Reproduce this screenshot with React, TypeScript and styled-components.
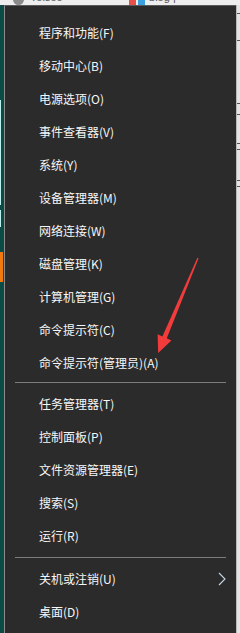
import React from "react";
import styled, { createGlobalStyle } from "styled-components";

const Global = createGlobalStyle`
  html, body { margin: 0; padding: 0; background: #e9e9e9; }
  body { width: 240px; height: 633px; overflow: hidden; }
  #root { width: 240px; height: 633px; }
`;

const Screen = styled.div`
  position: relative;
  width: 240px;
  height: 633px;
  display: grid;
  grid-template-rows: 5px 1fr;
  overflow: hidden;
  background: #e9e9e9;
`;

const TabStrip = styled.div`
  display: flex;
  align-items: flex-start;
  height: 5px;
  overflow: hidden;
  background: #eeeeee;
  font-family: "Liberation Sans", Arial, sans-serif;
  font-size: 11px;
  color: #555;
`;

const TabCircle = styled.div<{ $color: string; $left: number; $size: number }>`
  flex: none;
  width: ${(p) => p.$size}px;
  height: ${(p) => p.$size}px;
  margin-left: ${(p) => p.$left}px;
  margin-top: -${(p) => p.$size / 2 + 1}px;
  border-radius: 50%;
  box-sizing: border-box;
  ${(p) => (p.$color === "pink" ? "border: 2px solid #e83fa6; background: #fff;" : `background: ${p.$color};`)}
`;

const TabText = styled.span<{ $left: number }>`
  flex: none;
  margin-left: ${(p) => p.$left}px;
  margin-top: -9px;
  line-height: 12px;
  white-space: nowrap;
`;

const TabSquare = styled.div<{ $color: string; $left: number }>`
  flex: none;
  width: 7px;
  height: 8px;
  margin-left: ${(p) => p.$left}px;
  margin-top: -3px;
  background: ${(p) => p.$color};
`;

const Body = styled.div`
  display: grid;
  grid-template-columns: 4px 1fr 4px;
  min-height: 0;
`;

const LeftEdge = styled.div`
  display: flex;
  flex-direction: column;
  background: #0c4a45;
`;

const EdgeBit = styled.div<{ $h: number; $color: string; $w: number }>`
  flex: none;
  height: ${(p) => p.$h}px;
  width: ${(p) => p.$w}px;
  background: ${(p) => p.$color};
`;

const RightEdge = styled.div`
  display: flex;
  flex-direction: column;
  background: #e4e4e4;
  border-left: 1px solid #b8b8b8;
  box-sizing: border-box;
`;

const RightMark = styled.div<{ $top: number }>`
  flex: none;
  margin-top: ${(p) => p.$top}px;
  width: 3px;
  height: 1px;
  background: #555;
`;

const Menu = styled.div`
  display: flex;
  flex-direction: column;
  background: #2b2b2b;
  border-left: 1px solid #8d8d8d;
  border-top: 1px solid #5a5a5a;
  padding-top: 10px;
  font-family: "Noto Sans CJK SC", "Microsoft YaHei", sans-serif;
  font-size: 12px;
  color: #f7f7f7;
`;

const Item = styled.div`
  display: flex;
  align-items: center;
  justify-content: space-between;
  height: 33px;
  padding-left: 34px;
  padding-right: 10px;
  white-space: nowrap;
`;

const Separator = styled.div<{ $top: number; $bottom: number }>`
  height: 1px;
  margin: ${(p) => p.$top}px 10px ${(p) => p.$bottom}px 10px;
  background: #7c7c7c;
`;

const Overlay = styled.svg`
  position: absolute;
  left: 0;
  top: 0;
  width: 240px;
  height: 633px;
  pointer-events: none;
`;

const Chevron = () => (
  <svg width="8" height="14" viewBox="0 0 8 14" style={{ display: "block" }}>
    <polyline points="1,1 7,7 1,13" fill="none" stroke="#c9d6e6" strokeWidth="1.1" />
  </svg>
);

const groupA = [
  "程序和功能(F)",
  "移动中心(B)",
  "电源选项(O)",
  "事件查看器(V)",
  "系统(Y)",
  "设备管理器(M)",
  "网络连接(W)",
  "磁盘管理(K)",
  "计算机管理(G)",
  "命令提示符(C)",
  "命令提示符(管理员)(A)",
];

const groupB = ["任务管理器(T)", "控制面板(P)", "文件资源管理器(E)", "搜索(S)", "运行(R)"];

export default function App() {
  return (
    <>
      <Global />
      <Screen>
        <TabStrip>
          <TabCircle $color="#8a8a8a" $left={13} $size={11} />
          <TabText $left={6}>Yolsoo</TabText>
          <TabText $left={28}>×</TabText>
          <TabSquare $color="#e8504a" $left={32} />
          <TabSquare $color="#3aa0e0" $left={2} />
          <TabText $left={4}>blog | ⋯</TabText>
          <TabText $left={22}>×</TabText>
          <TabCircle $color="pink" $left={40} $size={14} />
        </TabStrip>
        <Body>
          <LeftEdge>
            <EdgeBit $h={95} $color="#0c4a45" $w={1} />
            <EdgeBit $h={105} $color="#bfeeee" $w={1} />
            <EdgeBit $h={5} $color="#0c4a45" $w={1} />
            <EdgeBit $h={17} $color="#bfeeee" $w={1} />
            <EdgeBit $h={25} $color="#0c4a45" $w={1} />
            <EdgeBit $h={30} $color="#f07a10" $w={3} />
          </LeftEdge>
          <Menu>
            {groupA.map((t) => (
              <Item key={t}>{t}</Item>
            ))}
            <Separator $top={3} $bottom={4} />
            {groupB.map((t) => (
              <Item key={t}>{t}</Item>
            ))}
            <Separator $top={5} $bottom={4} />
            <Item>
              <span>关机或注销(U)</span>
              <Chevron />
            </Item>
            <Item>桌面(D)</Item>
          </Menu>
          <RightEdge>
            <RightMark $top={8} />
            <RightMark $top={26} />
            <RightMark $top={62} />
            <RightMark $top={10} />
            <RightMark $top={28} />
            <RightMark $top={5} />
            <RightMark $top={30} />
            <RightMark $top={5} />
          </RightEdge>
        </Body>
        <Overlay viewBox="0 0 240 633">
          <polygon
            points="197.4,257.8 162.4,336.4 157.6,334.2 158.2,353 171.4,340.6 166.8,338.3 198.6,258.3"
            fill="#f23c3c"
          />
        </Overlay>
      </Screen>
    </>
  );
}
